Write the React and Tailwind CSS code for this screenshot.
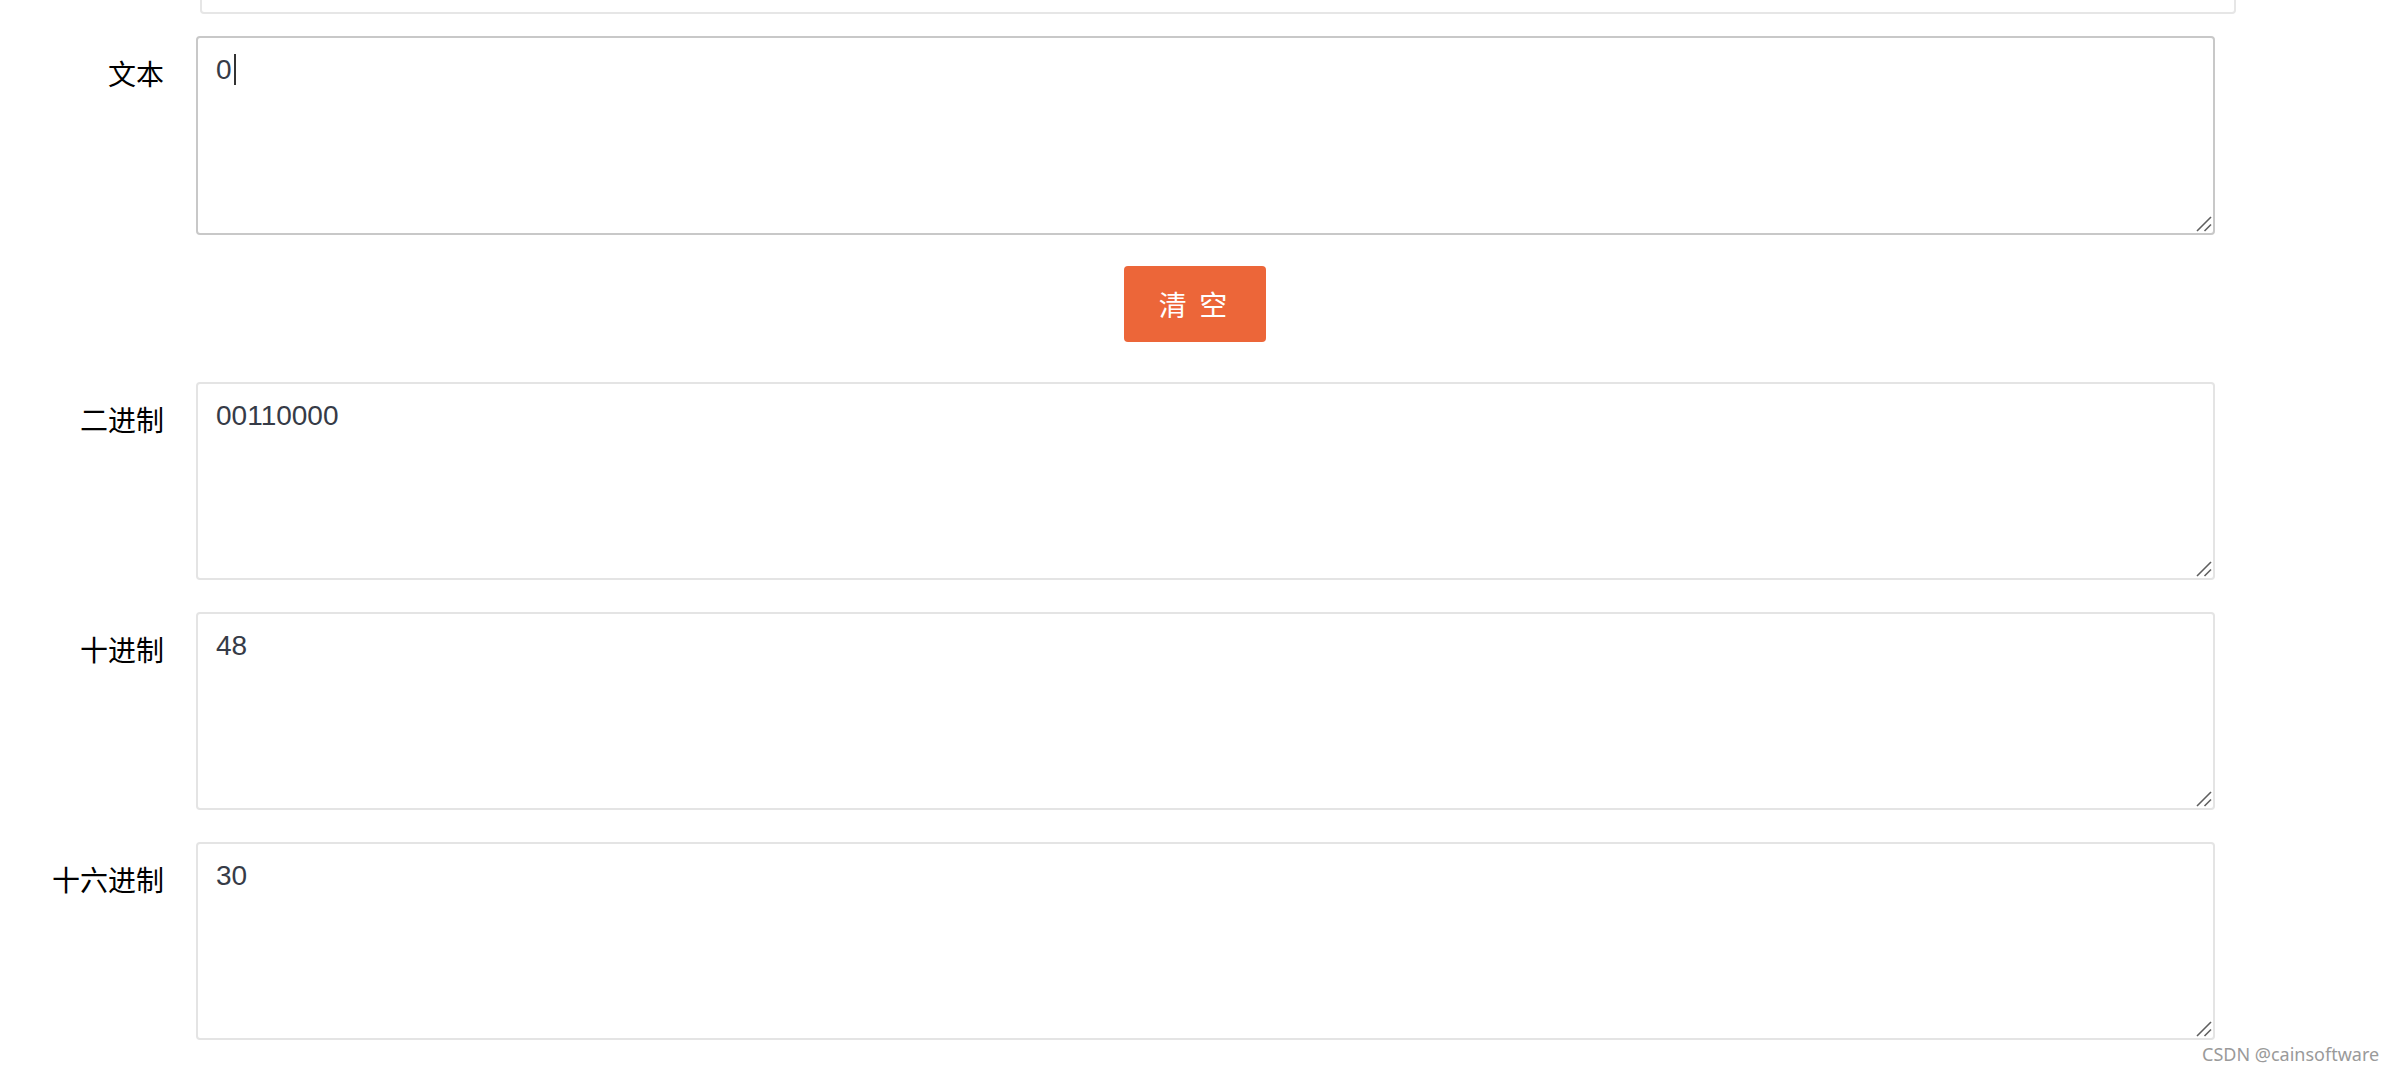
import React from "react";

function Grip() {
  return (
    <svg
      className="pointer-events-none absolute right-[3px] bottom-[3px]"
      width="16"
      height="16"
      viewBox="0 0 16 16"
    >
      <line x1="1" y1="15" x2="15" y2="1" stroke="#5f5f5f" strokeWidth="1.6" />
      <line x1="8.5" y1="15" x2="15" y2="8.5" stroke="#5f5f5f" strokeWidth="1.6" />
    </svg>
  );
}

function Row({ label, value, border, caret, h }) {
  return (
    <div className="flex gap-[32px]">
      <div className="w-[164px] shrink-0 text-right pt-[16px] text-[28px] leading-[42px] text-black [font-family:'Noto_Sans_CJK_SC','Noto_Sans',sans-serif]">
        {label}
      </div>
      <div className="relative">
        <textarea
          readOnly
          defaultValue={value}
          className={
            "block w-[2019px] resize-none rounded-[4px] border-2 bg-white px-[18px] py-[11px] text-[28px] leading-[42px] text-[#363b47] outline-none [font-family:'Liberation_Sans',Arial,sans-serif] " +
            border +
            " " +
            h
          }
        />
        <Grip />
        {caret && (
          <div className="absolute left-[38px] top-[18px] w-[2px] h-[31px] bg-[#333]" />
        )}
      </div>
    </div>
  );
}

export default function App() {
  return (
    <div className="relative flex flex-col w-[2406px] h-[1074px] overflow-hidden bg-white">
      <div className="pl-[200px] mt-[-26px]">
        <div className="w-[2036px] h-[40px] rounded-[4px] border-2 border-[#e6e6e6]" />
      </div>
      <div className="flex flex-col pt-[22px]">
        <Row label="文本" value="0" border="border-[#c8c8c8]" h="h-[199px]" caret />
        <div className="flex gap-[32px] pt-[31px] pb-[40px]">
          <div className="w-[164px] shrink-0" />
          <div className="flex w-[2019px] justify-center pr-[22px]">
            <button className="w-[142px] h-[76px] rounded-[4px] bg-[#ec6639] text-white text-[28px] tracking-[3px] [font-family:'Noto_Sans_CJK_SC',sans-serif]">
              清 空
            </button>
          </div>
        </div>
        <div className="flex flex-col gap-[32px]">
          <Row label="二进制" value="00110000" border="border-[#e4e4e4]" h="h-[198px]" />
          <Row label="十进制" value="48" border="border-[#e4e4e4]" h="h-[198px]" />
          <Row label="十六进制" value="30" border="border-[#e4e4e4]" h="h-[198px]" />
        </div>
      </div>
      <div className="absolute left-[2202px] top-[1042px] text-[18px] leading-[24px] text-[#9a9a9a] [font-family:'Noto_Sans',sans-serif] whitespace-nowrap">
        CSDN @cainsoftware
      </div>
    </div>
  );
}
